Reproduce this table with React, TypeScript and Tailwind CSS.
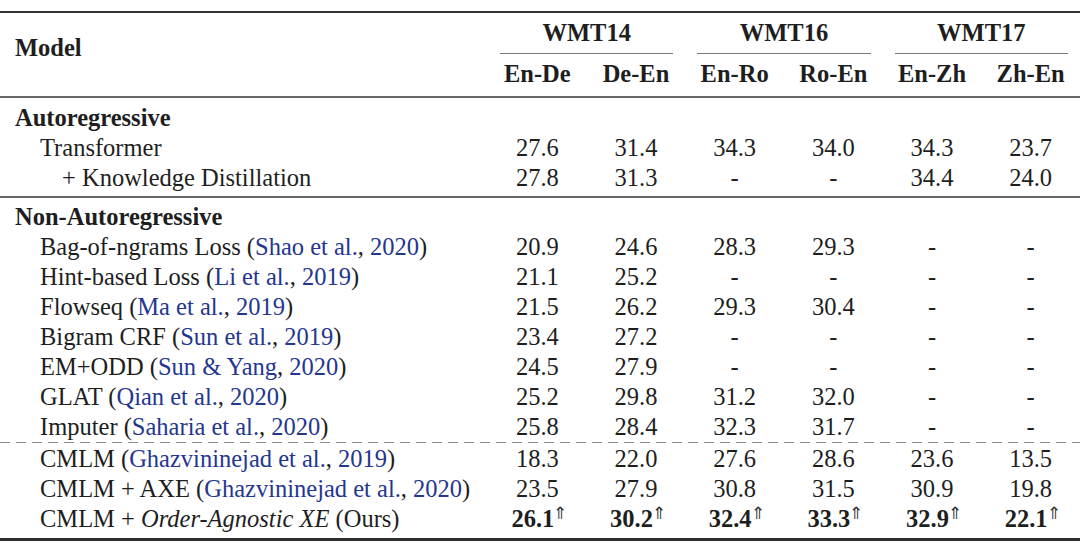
import React from "react";

type Cell = string | { v: string; best: true };

interface Row {
  name: React.ReactNode;
  indent?: number;
  cells: Cell[];
}

const Cite = ({ children }: { children: React.ReactNode }) => (
  <span className="text-[#24368f]">{children}</span>
);

const AR_ROWS: Row[] = [
  { name: "Transformer", indent: 1, cells: ["27.6", "31.4", "34.3", "34.0", "34.3", "23.7"] },
  {
    name: "+ Knowledge Distillation",
    indent: 2,
    cells: ["27.8", "31.3", "-", "-", "34.4", "24.0"],
  },
];

const NAR_ROWS: Row[] = [
  {
    name: (
      <>
        Bag-of-ngrams Loss (<Cite>Shao et al.</Cite>, <Cite>2020</Cite>)
      </>
    ),
    cells: ["20.9", "24.6", "28.3", "29.3", "-", "-"],
  },
  {
    name: (
      <>
        Hint-based Loss (<Cite>Li et al.</Cite>, <Cite>2019</Cite>)
      </>
    ),
    cells: ["21.1", "25.2", "-", "-", "-", "-"],
  },
  {
    name: (
      <>
        Flowseq (<Cite>Ma et al.</Cite>, <Cite>2019</Cite>)
      </>
    ),
    cells: ["21.5", "26.2", "29.3", "30.4", "-", "-"],
  },
  {
    name: (
      <>
        Bigram CRF (<Cite>Sun et al.</Cite>, <Cite>2019</Cite>)
      </>
    ),
    cells: ["23.4", "27.2", "-", "-", "-", "-"],
  },
  {
    name: (
      <>
        EM+ODD (<Cite>Sun &amp; Yang</Cite>, <Cite>2020</Cite>)
      </>
    ),
    cells: ["24.5", "27.9", "-", "-", "-", "-"],
  },
  {
    name: (
      <>
        GLAT (<Cite>Qian et al.</Cite>, <Cite>2020</Cite>)
      </>
    ),
    cells: ["25.2", "29.8", "31.2", "32.0", "-", "-"],
  },
  {
    name: (
      <>
        Imputer (<Cite>Saharia et al.</Cite>, <Cite>2020</Cite>)
      </>
    ),
    cells: ["25.8", "28.4", "32.3", "31.7", "-", "-"],
  },
];

const CMLM_ROWS: Row[] = [
  {
    name: (
      <>
        CMLM (<Cite>Ghazvininejad et al.</Cite>, <Cite>2019</Cite>)
      </>
    ),
    cells: ["18.3", "22.0", "27.6", "28.6", "23.6", "13.5"],
  },
  {
    name: (
      <>
        CMLM + AXE (<Cite>Ghazvininejad et al.</Cite>, <Cite>2020</Cite>)
      </>
    ),
    cells: ["23.5", "27.9", "30.8", "31.5", "30.9", "19.8"],
  },
  {
    name: (
      <>
        CMLM + <i>Order-Agnostic XE</i> (Ours)
      </>
    ),
    cells: [
      { v: "26.1", best: true },
      { v: "30.2", best: true },
      { v: "32.4", best: true },
      { v: "33.3", best: true },
      { v: "32.9", best: true },
      { v: "22.1", best: true },
    ],
  },
];

const GRID = "grid grid-cols-[488px_repeat(6,minmax(0,1fr))]";

function DataRow({ row }: { row: Row }) {
  return (
    <div className={`${GRID} h-[30px] items-center pt-[2px]`}>
      <div className={`${row.indent === 2 ? "pl-[62px]" : "pl-[40px]"} whitespace-nowrap`}>
        {row.name}
      </div>
      {row.cells.map((c, i) =>
        typeof c === "string" ? (
          <div key={i} className="text-center">
            {c}
          </div>
        ) : (
          <div key={i} className="flex items-start justify-center pl-[4px]">
            <b>{c.v}</b>
            {/* improvement marker */}
            <span className="-ml-[1px] -mt-[2px] font-['DejaVu_Sans',sans-serif] text-[17px] font-extralight leading-none text-[#333]">
              ⇑
            </span>
          </div>
        ),
      )}
    </div>
  );
}

function GroupTitle({ children }: { children: React.ReactNode }) {
  return (
    <div className="flex h-[30px] items-center pl-[15px] pt-[2px] font-bold">{children}</div>
  );
}

export default function App() {
  return (
    <div className="h-[548px] w-[1080px] bg-white pt-[11px] font-['Liberation_Serif','Times_New_Roman',serif] text-[24.5px] leading-none text-[#1e1e1e]">
      <div className="h-[2px] bg-[#333]" />

      {/* header */}
      <div className={`${GRID} font-bold`}>
        <div className="row-span-2 flex items-center pb-[12px] pl-[15px]">Model</div>
        {["WMT14", "WMT16", "WMT17"].map((g) => (
          <div key={g} className="col-span-2 flex h-[41px] flex-col">
            <div className="flex flex-1 items-center justify-center pt-[1px]">{g}</div>
            <div className="mx-[12px] h-px bg-[#777]" />
          </div>
        ))}
        {["En-De", "De-En", "En-Ro", "Ro-En", "En-Zh", "Zh-En"].map((l) => (
          <div key={l} className="flex h-[42px] items-center justify-center pb-[2px]">
            {l}
          </div>
        ))}
      </div>
      <div className="h-[2px] bg-[#666]" />

      <div className="pt-[4px]">
        <GroupTitle>Autoregressive</GroupTitle>
        {AR_ROWS.map((r, i) => (
          <DataRow key={i} row={r} />
        ))}
      </div>
      <div className="mt-[4px] h-[1.5px] bg-[#666]" />

      <div className="pt-[4px]">
        <GroupTitle>Non-Autoregressive</GroupTitle>
        {NAR_ROWS.map((r, i) => (
          <DataRow key={i} row={r} />
        ))}
      </div>
      <div className="h-[1.5px] bg-[repeating-linear-gradient(to_right,#8a8a8a_0_10px,transparent_10px_16px)]" />

      <div>
        {CMLM_ROWS.map((r, i) => (
          <DataRow key={i} row={r} />
        ))}
      </div>
      <div className="mt-[5px] h-[3px] bg-[#2e2e2e]" />
    </div>
  );
}
